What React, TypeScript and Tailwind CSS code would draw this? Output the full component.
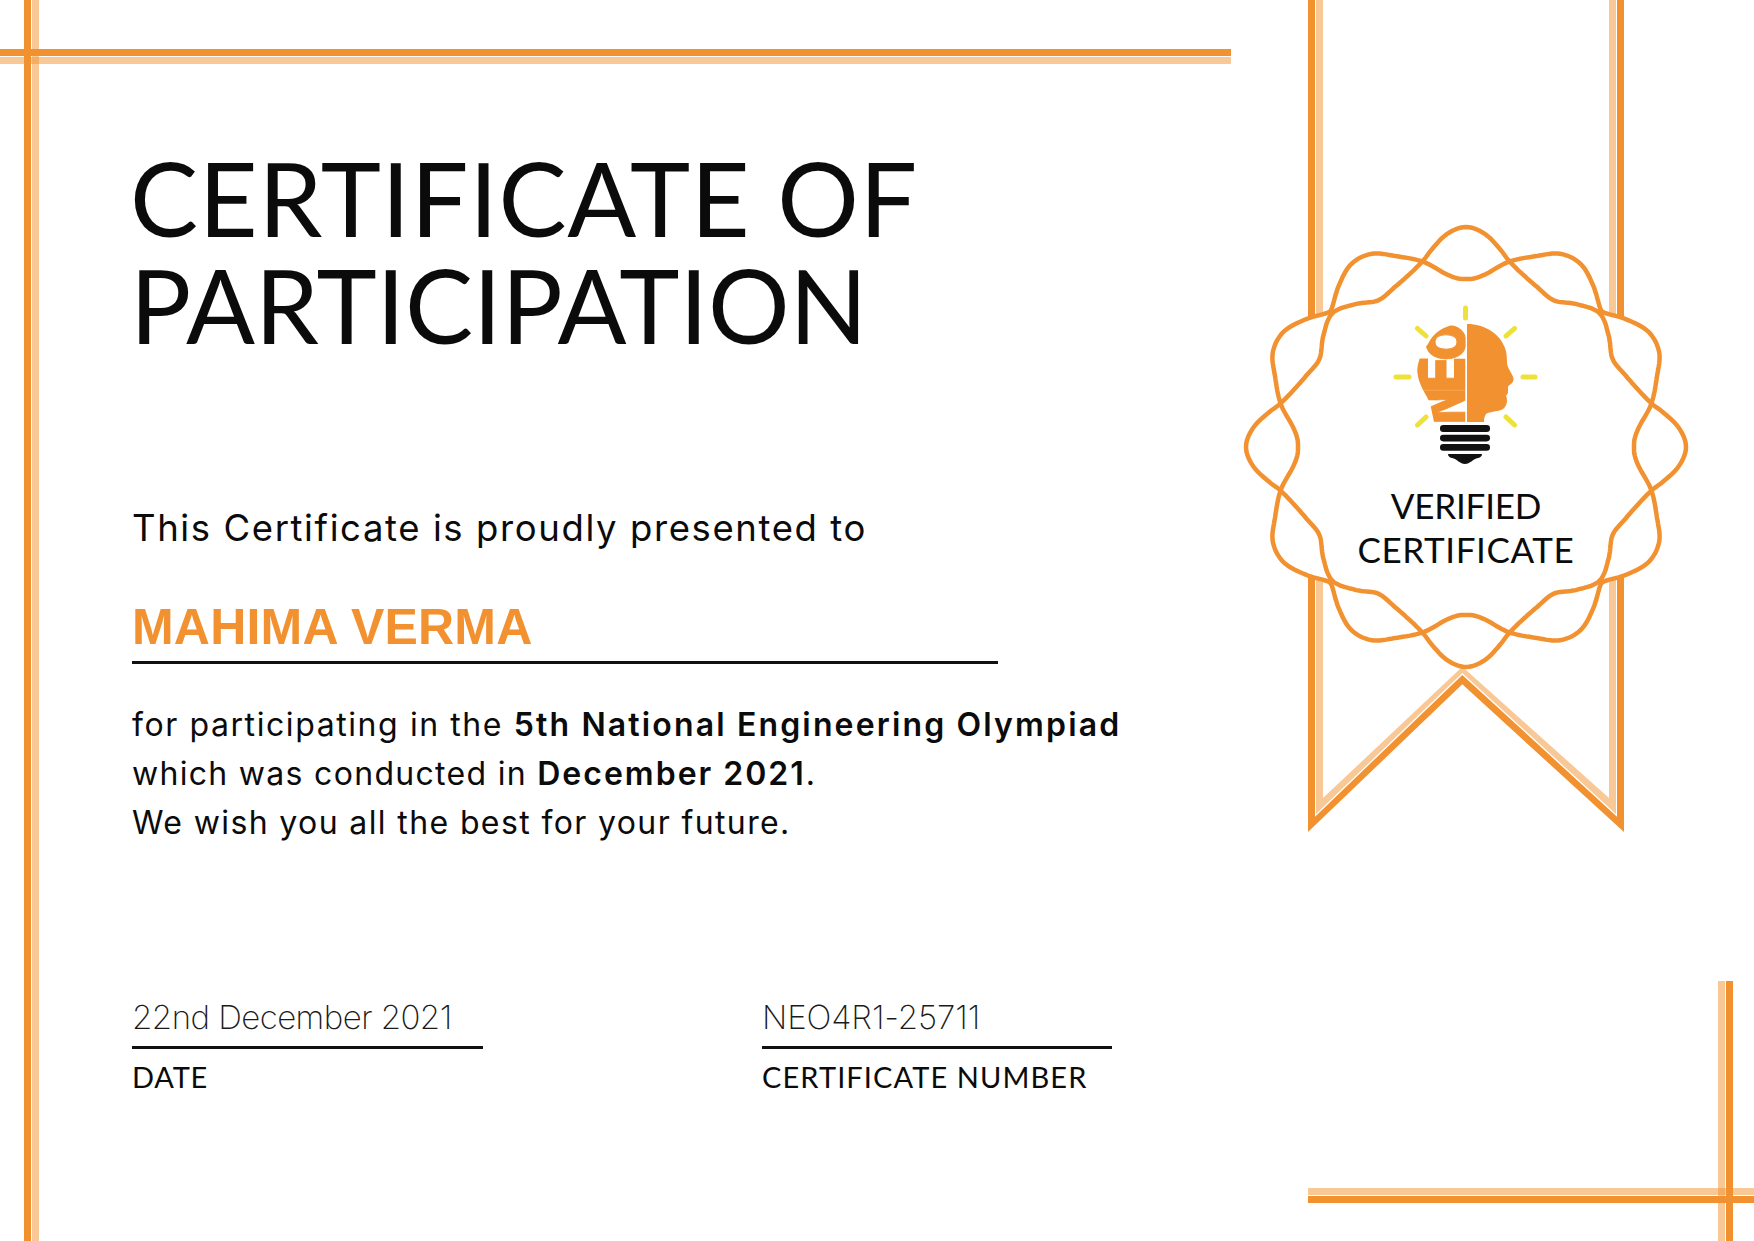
import React from "react";

type Knot = [number, number];
const A: Knot[] = [[0, 220], [5, 214], [10, 200], [13, 191], [18, 182], [24, 175], [31, 171], [38, 181], [45, 189]];
const B: Knot[] = [[0, 168], [3, 169], [7, 175], [13, 190], [20, 203], [26, 215], [32, 216], [38, 206], [43, 195], [45, 192]];

function radius(q: Knot[], deg: number): number {
  let t = ((deg % 90) + 90) % 90;
  if (t > 45) t = 90 - t;
  for (let i = 0; i < q.length - 1; i++) {
    if (t <= q[i + 1][0]) {
      const [x0, y0] = q[i];
      const [x1, y1] = q[i + 1];
      const h = x1 - x0;
      const m0 = i === 0 ? 0 : (y1 - q[i - 1][1]) / (x1 - q[i - 1][0]);
      const m1 = i + 2 >= q.length ? 0 : (q[i + 2][1] - y0) / (q[i + 2][0] - x0);
      const u = (t - x0) / h;
      const u2 = u * u;
      const u3 = u2 * u;
      return (2 * u3 - 3 * u2 + 1) * y0 + (u3 - 2 * u2 + u) * h * m0 + (-2 * u3 + 3 * u2) * y1 + (u3 - u2) * h * m1;
    }
  }
  return q[q.length - 1][1];
}

function ring(q: Knot[]): string {
  let d = "";
  for (let deg = 0; deg < 360; deg += 0.75) {
    const r = radius(q, deg);
    const a = (deg * Math.PI) / 180;
    d += `${deg === 0 ? "M" : "L"}${(1466 + r * Math.sin(a)).toFixed(1)} ${(447 - r * Math.cos(a)).toFixed(1)}`;
  }
  return d + "Z";
}

const ringA = ring(A);
const ringB = ring(B);

function Seal() {
  return (
    <svg width="514" height="840" viewBox="1240 0 514 840" className="block">
      <path d="M1308 0V832L1462.3 684.3L1624 832V0H1617V816.7L1462.3 675L1315 816.7V0Z" fill="#f29130" />
      <path d="M1316 0V814L1462.3 673L1616 814V0H1609V798L1462.3 666.7L1323 798V0Z" fill="#f29130" fillOpacity="0.5" />
      <path d={ringA} fill="#fff" />
      <path d={ringB} fill="#fff" />
      <path d={ringA} fill="none" stroke="#f29130" strokeWidth="4.5" />
      <path d={ringB} fill="none" stroke="#f29130" strokeWidth="4.5" />
      <g transform="translate(1370 290)">
        <g stroke="#ede13a" strokeWidth="5" strokeLinecap="round">
          <path d="M95.5 18V28M26 87H39M153 87H165M47.5 38.5L56 46M144.5 38.5L136 46M56 127L47.5 135M136 127L144.5 135" />
        </g>
        <clipPath id="bulb">
          <path d="M95.5 34C80 34 66 38 58 54C52 62 47 72 47.500 82C48 94 56 104 60 113L64 132H95.5Z" />
        </clipPath>
        <g clipPath="url(#bulb)" fontFamily="Inter" fontWeight="900" fill="#f29130" stroke="#f29130" strokeWidth="1">
          <text transform="translate(94.5 133.500) rotate(-90)" fontSize="62" textLength="35" lengthAdjust="spacingAndGlyphs">
            N
          </text>
          <text transform="translate(94.5 102.500) rotate(-90)" fontSize="66" textLength="36" lengthAdjust="spacingAndGlyphs">
            E
          </text>
          <text transform="translate(94.5 70.500) rotate(-90)" fontSize="52" textLength="37" lengthAdjust="spacingAndGlyphs">
            O
          </text>
        </g>
        <path
          d="M97 34C115 34 130 44 135 58C138 66 136 72 138 77C140 82 144 86 143.500 90C143 94 138 95 138 97L138 103L136 106C138 110 137 116 133 119C128 122 120 121 116 124C114 127 114 130 114 132L97 132Z"
          fill="#f29130"
        />
        <rect x="70" y="135" width="50" height="7" rx="3.300" fill="#111" />
        <rect x="70" y="144.700" width="50" height="6.700" rx="3.300" fill="#111" />
        <rect x="70" y="154" width="50" height="6.700" rx="3.300" fill="#111" />
        <path d="M78 164H112Q112 167 108 168C103 169 100 174 95 174C90 174 87 169 82 168Q78 167 78 164Z" fill="#111" />
      </g>
    </svg>
  );
}

export default function App() {
  return (
    <div className="relative flex w-[1754px] h-[1241px] overflow-hidden bg-white text-[#0b0b0b] [font-family:Inter,sans-serif]">
      <div className="flex shrink-0 gap-px w-[39px] pl-[24px] h-full">
        <div className="w-[7px] bg-[#f29130]" />
        <div className="w-[7px] bg-[#f29130]/50" />
      </div>

      <div className="absolute left-0 top-[49px] flex flex-col gap-px w-[1231px]">
        <div className="h-[7px] bg-[#f29130]" />
        <div className="h-[7px] bg-[#f29130]/50" />
      </div>

      <div className="absolute left-[1718px] top-[981px] flex gap-px h-[260px]">
        <div className="w-[7px] bg-[#f29130]/50" />
        <div className="w-[7px] bg-[#f29130]" />
      </div>
      <div className="absolute left-[1308px] top-[1188px] flex flex-col gap-px w-[446px]">
        <div className="h-[7px] bg-[#f29130]/50" />
        <div className="h-[7px] bg-[#f29130]" />
      </div>

      <main className="relative w-[1201px] shrink-0 pl-[93px] pt-[144px]">
        <h1 className="-ml-[2px] text-[102px] leading-[107px] font-normal whitespace-nowrap [font-family:Lato,sans-serif]">
          <span className="block tracking-[0.7px]">CERTIFICATE OF</span>
          <span className="block tracking-[-0.1px]">PARTICIPATION</span>
        </h1>
        <p className="mt-[145px] text-[36.5px] leading-[50px] tracking-[1.6px] whitespace-nowrap">This Certificate is proudly presented to</p>
        <div className="mt-[25px] w-[866px] border-b-[3px] border-[#111] pb-[5px] pt-[20px] text-[50px] leading-[58px] font-bold text-[#f29130] tracking-[0.2px] [font-family:'Liberation_Sans',Arial,sans-serif]">
          MAHIMA VERMA
        </div>
        <div className="mt-[36px] text-[32px] leading-[49px] whitespace-nowrap">
          <p className="tracking-[1.58px]">
            for participating in the <b className="font-semibold tracking-[2.15px]">5th National Engineering Olympiad</b>
          </p>
          <p className="tracking-[1.3px]">
            which was conducted in <b className="font-semibold tracking-[2px]">December 2021</b>.
          </p>
          <p className="tracking-[1.38px]">We wish you all the best for your future.</p>
        </div>
        <div className="mt-[147px] grid grid-cols-[351px_350px] gap-x-[279px] gap-y-[10px]">
          <div className="h-[55px] border-b-[3px] border-[#111] text-[33px] leading-[46px] font-extralight text-[#1a1a1a] tracking-[-0.55px] whitespace-nowrap">
            22nd December 2021
          </div>
          <div className="h-[55px] border-b-[3px] border-[#111] text-[33px] leading-[46px] font-extralight text-[#1a1a1a] tracking-[-0.1px] whitespace-nowrap">
            NEO4R1-25711
          </div>
          <div className="text-[29px] leading-[36px] tracking-[0.8px] [font-family:Lato,sans-serif]">DATE</div>
          <div className="text-[29px] leading-[36px] tracking-[1.1px] whitespace-nowrap [font-family:Lato,sans-serif]">CERTIFICATE NUMBER</div>
        </div>
      </main>

      <aside className="relative w-[514px]">
        <Seal />
        <div className="absolute left-[26px] top-[483px] w-[400px] text-center text-[35px] leading-[44px] [font-family:Lato,sans-serif]">
          <span className="block tracking-[-0.2px]">VERIFIED</span>
          <span className="block tracking-[0.6px]">CERTIFICATE</span>
        </div>
      </aside>
    </div>
  );
}
